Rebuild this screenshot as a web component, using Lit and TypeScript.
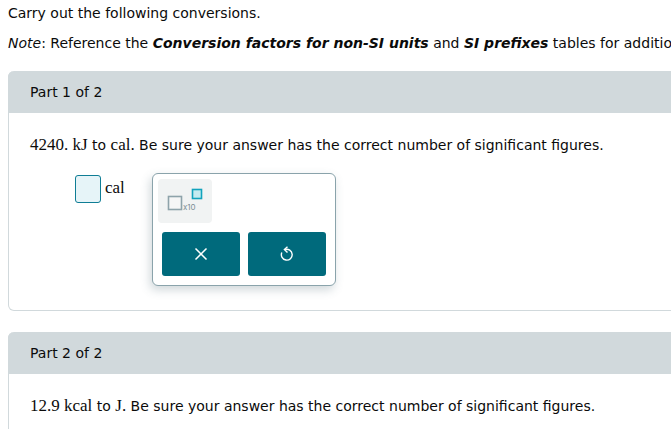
import { LitElement, html, css } from "lit";
import { customElement } from "lit/decorators.js";

@customElement("app-root")
export class AppRoot extends LitElement {
  static styles = css`
    :host {
      display: block;
      width: 671px;
      height: 429px;
      overflow: hidden;
      background: #fff;
      color: #0b0b0b;
      font-family: "DejaVu Sans", Verdana, sans-serif;
      font-size: 14px;
    }

    .page {
      width: 760px;
      padding: 0 0 0 8px;
      box-sizing: border-box;
    }

    .line {
      margin: 0;
      height: 24px;
      line-height: 24px;
      white-space: nowrap;
    }

    .intro {
      padding-top: 1px;
    }

    .note {
      margin-top: 6px;
    }

    .card {
      border: 1px solid #d1d9dc;
      border-top: none;
      border-radius: 6px;
    }

    .card.one {
      margin-top: 16px;
      height: 239px;
    }

    .card.two {
      margin-top: 21px;
      height: 140px;
    }

    .head {
      height: 42px;
      margin: 0 -1px;
      padding-left: 22px;
      background: #d1d9dc;
      border-radius: 6px 6px 0 0;
      line-height: 43px;
    }

    .question {
      margin: 20px 0 0 21px;
      height: 24px;
      line-height: 24px;
      white-space: nowrap;
    }

    .num {
      font-family: "Liberation Serif", "Times New Roman", serif;
      font-size: 17px;
    }

    .answer {
      display: flex;
      align-items: flex-start;
      margin: 17px 0 0 66px;
    }

    .input {
      width: 26px;
      height: 28px;
      box-sizing: border-box;
      margin-top: 1px;
      background: #e6f4f8;
      border: 1px solid #0f7d95;
      border-radius: 3px;
    }

    .unit {
      margin-left: 4px;
      font-family: "Liberation Serif", "Times New Roman", serif;
      font-size: 17px;
      line-height: 28px;
    }

    .palette {
      width: 184px;
      height: 113px;
      box-sizing: border-box;
      margin: -1px 0 0 27px;
      padding: 5px 9px 0 5px;
      background: #fff;
      border: 1px solid #8aa3ab;
      border-radius: 6px;
      box-shadow: -2px 4px 10px rgba(70, 100, 110, 0.25);
    }

    .tool {
      display: block;
      width: 54px;
      height: 44px;
      background: #f1f3f3;
      border-radius: 4px;
    }

    .buttons {
      display: flex;
      gap: 8px;
      margin: 9px 0 0 4px;
    }

    .btn {
      display: flex;
      align-items: center;
      justify-content: center;
      flex: 1;
      height: 44px;
      background: #006a7c;
      border-radius: 3px;
    }
  `;

  render() {
    return html`
      <div class="page">
        <p class="line intro">Carry out the following conversions.</p>
        <p class="line note">
          <i>Note</i>: Reference the <b><i>Conversion factors for non-SI units</i></b> and
          <b><i>SI prefixes</i></b> tables for additional information.
        </p>

        <section class="card one">
          <div class="head">Part 1 of 2</div>
          <div class="question">
            <span class="num">4240. kJ</span> to <span class="num">cal.</span> Be sure your answer
            has the correct number of significant figures.
          </div>
          <div class="answer">
            <div class="input"></div>
            <div class="unit">cal</div>
            <div class="palette">
              <svg class="tool" viewBox="0 0 54 44">
                <rect x="10.5" y="17.5" width="13" height="13" fill="#f6f6f6" stroke="#8ea3aa" stroke-width="1.6"></rect>
                <text x="25" y="31" font-family="Inter, sans-serif" font-size="8" fill="#7d8f96">x10</text>
                <rect x="34.5" y="10.5" width="9" height="9" fill="#c4ebf0" stroke="#12a3bd" stroke-width="1.6"></rect>
              </svg>
              <div class="buttons">
                <div class="btn">
                  <svg width="14" height="14" viewBox="0 0 14 14" fill="none" stroke="#fff" stroke-width="1.5">
                    <path d="M1.5 1.5 12.5 12.5M12.5 1.5 1.5 12.5"></path>
                  </svg>
                </div>
                <div class="btn">
                  <svg width="14" height="16" viewBox="0 0 14 16" fill="none" stroke="#fff" stroke-width="1.4">
                    <path d="M5 3.6A5.4 5.4 0 1 1 1.8 6.6"></path>
                    <path d="M7.5.8 4.4 3.6 7.5 6.6"></path>
                  </svg>
                </div>
              </div>
            </div>
          </div>
        </section>

        <section class="card two">
          <div class="head">Part 2 of 2</div>
          <div class="question">
            <span class="num">12.9 kcal</span> to <span class="num">J.</span> Be sure your answer
            has the correct number of significant figures.
          </div>
        </section>
      </div>
    `;
  }
}
